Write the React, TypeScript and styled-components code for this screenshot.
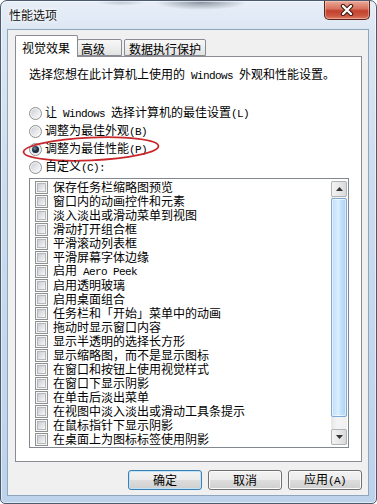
import React from 'react';
import styled, { createGlobalStyle, css } from 'styled-components';

const CJK = `"Noto Sans CJK SC", "Liberation Sans", sans-serif`;

const Global = createGlobalStyle`
  html, body { margin: 0; padding: 0; background: #ffffff; }
  body { font-family: ${CJK}; font-size: 12px; }
`;

const Window = styled.div`
  position: relative;
  box-sizing: border-box;
  width: 377px;
  height: 504px;
  display: flex;
  flex-direction: column;
  padding: 0 7px 7px 6px;
  border: 1px solid #4b5b6d;
  border-radius: 7px 7px 5px 5px;
  background:
    radial-gradient(ellipse 46px 8px at 200px 1px, rgba(60, 70, 85, 0.55), transparent),
    radial-gradient(ellipse 26px 5px at 120px 0px, rgba(90, 100, 115, 0.35), transparent),
    linear-gradient(180deg, #e7eef7 0%, #dbe6f3 7%, #cbdcee 40%, #bdd3eb 100%);
  box-shadow: inset 0 0 0 1px rgba(255, 255, 255, 0.55);
  font-family: ${CJK};
  font-size: 12px;
  color: #000;
`;

const TitleBar = styled.div`
  height: 28px;
  flex-shrink: 0;
  display: flex;
  align-items: flex-start;
  justify-content: space-between;
`;

const Title = styled.div`
  padding: 7px 0 0 2px;
  line-height: 14px;
  color: #111;
  text-shadow: 0 0 5px #fff, 0 0 3px #fff;
`;

const CloseButton = styled.div`
  box-sizing: border-box;
  width: 46px;
  height: 19px;
  margin-right: -1px;
  border: 1px solid #5a241c;
  border-top: none;
  border-radius: 0 0 5px 5px;
  background: linear-gradient(180deg, #eaa99a 0%, #d9735f 42%, #c1422d 55%, #cc5740 82%, #df8068 100%);
  box-shadow: inset 0 0 0 1px rgba(255, 215, 205, 0.45);
  display: flex;
  align-items: center;
  justify-content: center;
`;

const Client = styled.div`
  flex: 1;
  min-height: 0;
  display: flex;
  flex-direction: column;
  background: #f0f0f0;
  border: 1px solid #8fa4bd;
  padding: 5px 6px 5px 7px;
`;

const TabStrip = styled.div`
  position: relative;
  z-index: 1;
  height: 22px;
  margin-bottom: -1px;
  display: flex;
  align-items: flex-start;
`;

const Tab = styled.div<{ $active?: boolean; $w: number; $pl: number; $ml?: number }>`
  box-sizing: border-box;
  width: ${(p) => p.$w}px;
  padding-left: ${(p) => p.$pl}px;
  margin-left: ${(p) => p.$ml ?? 0}px;
  border: 1px solid #898c95;
  border-radius: 2px 2px 0 0;
  line-height: 14px;
  white-space: nowrap;
  ${(p) =>
    p.$active
      ? css`
          height: 22px;
          padding-top: 5px;
          border-bottom: none;
          background: #ffffff;
        `
      : css`
          margin-top: 4px;
          height: 17px;
          padding-top: 2px;
          background: linear-gradient(180deg, #f8f8f8 0%, #eeeeee 50%, #e2e2e2 100%);
        `}
`;

const Panel = styled.div`
  flex: 1;
  min-height: 0;
  display: flex;
  flex-direction: column;
  background: #ffffff;
  border: 1px solid #898c95;
  padding: 10px 12px 13px 13px;
`;

const Description = styled.div`
  height: 14px;
  line-height: 14px;
  white-space: nowrap;
`;

const RadioGroup = styled.div`
  margin-top: 23px;
  display: flex;
  flex-direction: column;
`;

const RadioRow = styled.div`
  position: relative;
  height: 18px;
  display: flex;
  align-items: center;
  gap: 3px;
  white-space: nowrap;
`;

const Label = styled.span`
  display: block;
  line-height: 14px;
  white-space: nowrap;
`;

const RadioCircle = styled.span<{ $checked?: boolean }>`
  position: relative;
  box-sizing: border-box;
  flex-shrink: 0;
  width: 13px;
  height: 13px;
  border-radius: 50%;
  border: 1px solid #8e8f8f;
  background: #f4f4f4;
  &::after {
    content: '';
    position: absolute;
    border-radius: 50%;
    ${(p) =>
      p.$checked
        ? css`
            inset: 2px;
            background: radial-gradient(circle at 40% 35%, #6f8aa6 0%, #1c2f44 45%, #0a1420 100%);
            box-shadow: 0 0 0 1px #dfe3e8;
          `
        : css`
            inset: 1px;
            background: linear-gradient(135deg, #c9cdd3 0%, #e4e6e9 50%, #fbfbfb 100%);
          `}
  }
`;

const Annotation = styled.svg`
  position: absolute;
  left: -9px;
  top: -5px;
  pointer-events: none;
  overflow: visible;
`;

const ListBox = styled.div`
  flex: 1;
  min-height: 0;
  margin-top: 2px;
  display: flex;
  border: 1px solid #828790;
  padding: 1px;
  background: #ffffff;
`;

const Items = styled.div`
  flex: 1;
  min-width: 0;
  display: flex;
  flex-direction: column;
`;

const ItemRow = styled.div`
  flex-shrink: 0;
  height: 14px;
  display: flex;
  align-items: center;
  gap: 5px;
  padding-left: 4px;
`;

const CheckBox = styled.span`
  position: relative;
  box-sizing: border-box;
  flex-shrink: 0;
  width: 13px;
  height: 13px;
  border: 1px solid #8e8f8f;
  background: #f6f6f6;
  &::after {
    content: '';
    position: absolute;
    inset: 1px;
    border: 1px solid #b4b8bd;
    background: linear-gradient(135deg, #c8ccd2 0%, #e2e4e7 55%, #f7f7f7 100%);
  }
`;

const Scrollbar = styled.div`
  width: 16px;
  margin: 1px 0;
  display: flex;
  flex-direction: column;
  background: linear-gradient(90deg, #e6e6e6, #f5f5f5 40%, #f0f0f0);
`;

const ScrollButton = styled.div`
  box-sizing: border-box;
  height: 16px;
  border: 1px solid #b0b3b7;
  border-radius: 2px;
  background: linear-gradient(90deg, #f3f3f3 0%, #e8e8e8 50%, #d9d9d9 100%);
  display: flex;
  align-items: center;
  justify-content: center;
`;

const Track = styled.div`
  flex: 1;
  display: flex;
  flex-direction: column;
  padding: 1px 0;
`;

const Thumb = styled.div`
  box-sizing: border-box;
  border: 1px solid #7ea9d6;
  border-radius: 2px;
  background: linear-gradient(90deg, #bcdcf6 0%, #dcf0fd 45%, #c6e4fb 60%, #a9d2f3 100%);
  box-shadow: inset 0 0 0 1px rgba(255, 255, 255, 0.6);
`;

const TrackRest = styled.div``;

const ButtonRow = styled.div`
  margin-top: 8px;
  display: flex;
  justify-content: flex-end;
  gap: 6px;
`;

const DialogButton = styled.button<{ $default?: boolean }>`
  box-sizing: border-box;
  width: 74px;
  height: 20px;
  padding: 0;
  border-radius: 3px;
  font-family: ${CJK};
  font-size: 12px;
  line-height: 14px;
  color: #000;
  background: linear-gradient(180deg, #f3f3f3 0%, #ebebeb 48%, #dddddd 52%, #cfcfcf 100%);
  ${(p) =>
    p.$default
      ? css`
          border: 1px solid #3c7fb1;
          box-shadow: inset 0 0 0 1px #bfe3f8;
        `
      : css`
          border: 1px solid #707070;
          box-shadow: inset 0 0 0 1px #fbfbfb;
        `}
`;

const Latin = styled.span`
  font-family: "Liberation Mono", "DejaVu Sans Mono", monospace;
  font-size: 11px;
  letter-spacing: -0.6px;
`;

function Mixed({ text }: { text: string }) {
  const parts = text.split(/([\x20-\x7e]+)/);
  return (
    <>
      {parts.map((part, i) =>
        /^[\x20-\x7e]+$/.test(part) ? <Latin key={i}>{part}</Latin> : <React.Fragment key={i}>{part}</React.Fragment>
      )}
    </>
  );
}

const radios = [
  { label: '让 Windows 选择计算机的最佳设置(L)', checked: false },
  { label: '调整为最佳外观(B)', checked: false },
  { label: '调整为最佳性能(P)', checked: true },
  { label: '自定义(C):', checked: false },
];

const effects = [
  '保存任务栏缩略图预览',
  '窗口内的动画控件和元素',
  '淡入淡出或滑动菜单到视图',
  '滑动打开组合框',
  '平滑滚动列表框',
  '平滑屏幕字体边缘',
  '启用 Aero Peek',
  '启用透明玻璃',
  '启用桌面组合',
  '任务栏和「开始」菜单中的动画',
  '拖动时显示窗口内容',
  '显示半透明的选择长方形',
  '显示缩略图，而不是显示图标',
  '在窗口和按钮上使用视觉样式',
  '在窗口下显示阴影',
  '在单击后淡出菜单',
  '在视图中淡入淡出或滑动工具条提示',
  '在鼠标指针下显示阴影',
  '在桌面上为图标标签使用阴影',
  '在最大化和最小化时动态显示窗口',
];

const VISIBLE_ROWS = 19;

export default function App() {
  const thumbShare = VISIBLE_ROWS / effects.length;
  const visible = effects.slice(0, VISIBLE_ROWS);
  return (
    <>
      <Global />
      <Window>
        <TitleBar>
          <Title>性能选项</Title>
          <CloseButton>
            <svg width="16" height="12" viewBox="0 0 16 12">
              <path d="M4 2 L12 10 M12 2 L4 10" stroke="#3b1610" strokeWidth="4.4" strokeLinecap="round" />
              <path d="M4 2 L12 10 M12 2 L4 10" stroke="#ffffff" strokeWidth="2.4" strokeLinecap="round" />
            </svg>
          </CloseButton>
        </TitleBar>
        <Client>
          <TabStrip>
            <Tab $active $w={63} $pl={6}>视觉效果</Tab>
            <Tab $w={45} $pl={3} $ml={-1}>高级</Tab>
            <Tab $w={82} $pl={4} $ml={2}>数据执行保护</Tab>
          </TabStrip>
          <Panel>
            <Description>
              <Mixed text="选择您想在此计算机上使用的 Windows 外观和性能设置。" />
            </Description>
            <RadioGroup>
              {radios.map((r) => (
                <RadioRow key={r.label}>
                  <RadioCircle $checked={r.checked} />
                  <Label>
                    <Mixed text={r.label} />
                  </Label>
                  {r.checked && (
                    <Annotation width="142" height="28" viewBox="0 0 142 28">
                      <ellipse
                        cx="71"
                        cy="14"
                        rx="67.5"
                        ry="11.4"
                        fill="none"
                        stroke="#c8282c"
                        strokeWidth="1.8"
                        transform="rotate(-2.5 71 14)"
                      />
                    </Annotation>
                  )}
                </RadioRow>
              ))}
            </RadioGroup>
            <ListBox>
              <Items>
                {visible.map((e) => (
                  <ItemRow key={e}>
                    <CheckBox />
                    <Label>
                      <Mixed text={e} />
                    </Label>
                  </ItemRow>
                ))}
              </Items>
              <Scrollbar>
                <ScrollButton>
                  <svg width="7" height="4" viewBox="0 0 7 4">
                    <path d="M3.5 0 L7 4 L0 4 Z" fill="#333" />
                  </svg>
                </ScrollButton>
                <Track>
                  <Thumb style={{ flexGrow: thumbShare }} />
                  <TrackRest style={{ flexGrow: 1 - thumbShare }} />
                </Track>
                <ScrollButton>
                  <svg width="7" height="4" viewBox="0 0 7 4">
                    <path d="M0 0 L7 0 L3.5 4 Z" fill="#333" />
                  </svg>
                </ScrollButton>
              </Scrollbar>
            </ListBox>
          </Panel>
          <ButtonRow>
            <DialogButton $default>确定</DialogButton>
            <DialogButton>取消</DialogButton>
            <DialogButton>
              <Mixed text="应用(A)" />
            </DialogButton>
          </ButtonRow>
        </Client>
      </Window>
    </>
  );
}
